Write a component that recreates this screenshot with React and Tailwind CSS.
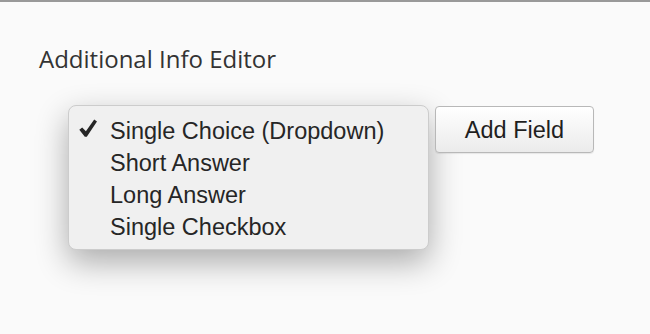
const options = ["Single Choice (Dropdown)", "Short Answer", "Long Answer", "Single Checkbox"];

function Check() {
  return (
    <svg viewBox="0 0 18 18" className="absolute left-[10px] top-[4px] w-[18px] h-[18px]" fill="#262626">
      <polygon points="0.3,10.8 3.2,8.4 6.9,12.2 15.2,0.4 18,2.4 7.8,17.8 5.8,17.8" />
    </svg>
  );
}

export default function App() {
  return (
    <div className="h-screen bg-[#fafafa] border-t-2 border-[#999999] font-['Liberation_Sans',Arial,sans-serif] text-[#333333]">
      <h2 className="pl-[39px] pt-[41px] text-[24px] leading-[32px] font-['Open_Sans',sans-serif] text-[#333333]">
        Additional Info Editor
      </h2>
      <div className="flex items-start mt-[30px] pl-[68px]">
        <ul className="w-[361px] h-[145px] pt-[9px] pb-[5px] rounded-[8px] bg-[#f0f0f0] border border-[#cccccc] shadow-[0_12px_32px_rgba(0,0,0,0.32)]">
          {options.map((o, i) => (
            <li key={o} className="relative pl-[41px] text-[23.5px] leading-[32px] text-[#262626]">
              {i === 0 && <Check />}
              {o}
            </li>
          ))}
        </ul>
        <button
          type="button"
          className="ml-[6px] mt-[1px] w-[159px] h-[47px] pt-[3px] rounded-[4px] border border-[#b8b8b8] bg-gradient-to-b from-[#ffffff] to-[#ebebeb] text-[23.5px] text-[#1f1f1f] shadow-[0_1px_1px_rgba(0,0,0,0.08)]"
        >
          Add Field
        </button>
      </div>
    </div>
  );
}
